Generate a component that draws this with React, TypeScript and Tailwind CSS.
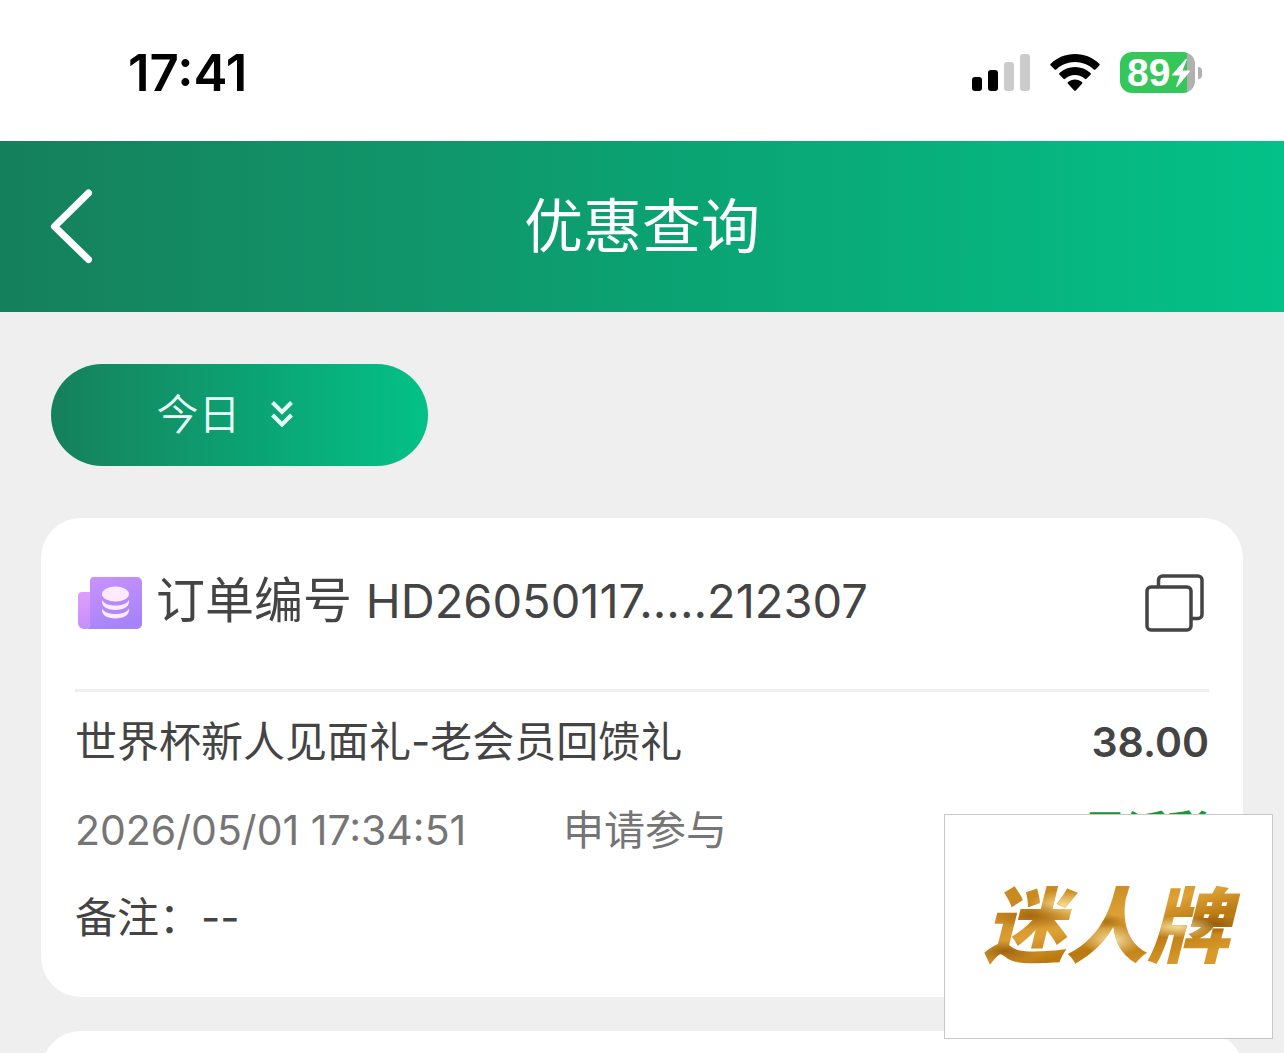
import React from 'react';

interface Order {
  id: string;
  title: string;
  amount: string;
  time: string;
  type: string;
  status: string;
  remark: string;
}

const order: Order = {
  id: 'HD26050117.....212307',
  title: '世界杯新人见面礼-老会员回馈礼',
  amount: '38.00',
  time: '2026/05/01 17:34:51',
  type: '申请参与',
  status: '已派彩',
  remark: '--',
};

const SignalIcon: React.FC = () => (
  <svg width="58" height="38" viewBox="0 0 58 38" aria-hidden="true">
    <rect x="0" y="23" width="10" height="14" rx="3" fill="#000" />
    <rect x="16" y="16" width="10" height="21" rx="3" fill="#000" />
    <rect x="32" y="8" width="10" height="29" rx="3" fill="#cbcbcb" />
    <rect x="48" y="0" width="10" height="37" rx="3" fill="#cbcbcb" />
  </svg>
);

const WifiIcon: React.FC = () => (
  <svg width="50" height="38" viewBox="0 0 50 38" aria-hidden="true">
    <path d="M25 0C15.500 0 7 3.700.700 9.700a1.200 1.200 0 0 0 0 1.700l3.900 4a1.200 1.200 0 0 0 1.700 0C11.200 10.800 17.800 8 25 8s13.800 2.800 18.700 7.400a1.200 1.200 0 0 0 1.700 0l3.900-4a1.200 1.200 0 0 0 0-1.700C43 3.700 34.500 0 25 0Z" />
    <path d="M25 13c-6 0-11.400 2.300-15.500 6a1.200 1.200 0 0 0 0 1.800l4 4a1.200 1.200 0 0 0 1.600 0C17.700 22.400 21.200 21 25 21s7.300 1.400 9.900 3.800a1.200 1.200 0 0 0 1.600 0l4-4a1.200 1.200 0 0 0 0-1.800C36.400 15.300 31 13 25 13Z" />
    <path d="M25 25.500c-2.700 0-5 .900-6.900 2.400a1.200 1.200 0 0 0-.1 1.800l6.200 6.800a1.100 1.100 0 0 0 1.600 0l6.200-6.800a1.200 1.200 0 0 0-.1-1.800c-1.900-1.500-4.200-2.400-6.900-2.400Z" />
  </svg>
);

const Battery: React.FC = () => (
  <div className="flex items-center gap-[3px]">
    <div className="flex h-[41px] w-[75px] items-center gap-px rounded-xl bg-linear-to-r from-[#35c75a] from-90% to-[#b0b0b0] to-90% pl-[7px]">
      <span className="font-['Liberation_Sans',sans-serif] text-[39px] leading-[44px] font-bold text-white">89</span>
      <svg width="20" height="28" viewBox="0 0 18 28" className="shrink-0" fill="#fff" aria-hidden="true">
        <path d="M13.500.300.400 15.200c-.5.600-.2 1.200.5 1.200h7L4.300 26.800c-.3 1 .6 1.500 1.300.700L17.600 12.700c.5-.6.200-1.300-.5-1.300h-6.600L14.700 1c.4-.9-.5-1.500-1.200-.7Z" />
      </svg>
    </div>
    <div className="h-3 w-1 rounded-r-full bg-[#b0b0b0]" />
  </div>
);

const BackIcon: React.FC = () => (
  <svg width="42" height="76" viewBox="0 0 42 76" fill="none" aria-hidden="true">
    <path d="M38.500 4 4.500 37.500l34 33" stroke="#fff" strokeWidth="7" strokeLinecap="round" strokeLinejoin="round" />
  </svg>
);

const DoubleChevronIcon: React.FC = () => (
  <svg width="22" height="26" viewBox="0 0 22 26" fill="none" aria-hidden="true">
    <path d="m1.500 1.500 9.500 9.500 9.500-9.500M1.500 14l9.500 9.500L20.500 14" stroke="#e9fff8" strokeWidth="4" />
  </svg>
);

const OrderIcon: React.FC = () => (
  <svg width="64" height="52" viewBox="0 0 64 52" className="shrink-0" aria-hidden="true">
    <defs>
      <linearGradient id="folderFront" x1="0" y1="0" x2="0.4" y2="1">
        <stop offset="0" stopColor="#cb93fb" />
        <stop offset="1" stopColor="#a784fb" />
      </linearGradient>
      <linearGradient id="folderBack" x1="0" y1="0" x2="0" y2="1">
        <stop offset="0" stopColor="#dda0fd" />
        <stop offset="1" stopColor="#c78df8" />
      </linearGradient>
    </defs>
    <path d="M16 0h43a5 5 0 0 1 5 5v42a5 5 0 0 1-5 5H6c4 0 6-2 6-6V4a4 4 0 0 1 4-4Z" fill="url(#folderFront)" />
    <path d="M4 15h8v31c0 4-2 6-6 6a6 6 0 0 1-6-6V19a4 4 0 0 1 4-4Z" fill="url(#folderBack)" />
    <ellipse cx="37.500" cy="17" rx="13.500" ry="7.500" fill="#fdeaff" />
    <path d="M24 23c2 3.800 7.500 5.500 13.500 5.500S49 26.800 51 23c1 6.500-5 10-13.500 10S23 29.500 24 23Z" fill="#fdeaff" />
    <path d="M24 31.500C26 35.300 31.500 37 37.500 37S49 35.300 51 31.500c1 6.500-5 10-13.500 10S23 38 24 31.500Z" fill="#fdeaff" />
  </svg>
);

const CopyIcon: React.FC = () => (
  <svg width="60" height="58" viewBox="0 0 60 58" fill="none" stroke="#444" strokeWidth="3.500" aria-hidden="true">
    <rect x="2" y="13" width="44" height="43" rx="4" />
    <path d="M13.500 13V6a4 4 0 0 1 4-4H53a4 4 0 0 1 4 4v34.500a4 4 0 0 1-4 4h-7" />
  </svg>
);

const StatusBar: React.FC = () => (
  <div className="flex h-[141px] shrink-0 items-center justify-between bg-white pt-1 pr-[82px] pl-32">
    <span className="text-[51px] leading-[60px] font-semibold text-black">17:41</span>
    <div className="flex items-center gap-5">
      <SignalIcon />
      <WifiIcon />
      <Battery />
    </div>
  </div>
);

const OrderCard: React.FC<{ order: Order }> = ({ order }) => (
  <article className="shrink-0 rounded-[40px] bg-white px-[34px] pt-[45px] pb-[43px] text-[#444]">
    <div className="flex items-center justify-between border-b-3 border-[#efefef] pb-[46px]">
      <div className="flex items-center gap-[14px] pl-[3px]">
        <OrderIcon />
        <h2 className="pb-1 text-[49px] leading-[76px]">
          订单编号 <span className="text-[47px]">{order.id}</span>
        </h2>
      </div>
      <button type="button" aria-label="复制" className="mr-1">
        <CopyIcon />
      </button>
    </div>
    <div className="flex items-center justify-between pt-[14px] text-[42px] leading-[72px]">
      <span>{order.title}</span>
      <span className="text-[41px] font-semibold">{order.amount}</span>
    </div>
    <div className="flex items-center pt-4 text-[41px] leading-[72px] text-[#757575]">
      <time className="w-[488px]">{order.time}</time>
      <span className="flex-1">{order.type}</span>
      <span className="font-semibold text-[#16992e]">{order.status}</span>
    </div>
    <p className="pt-4 text-[42px] leading-[72px]">备注：{order.remark}</p>
  </article>
);

const PromoPanel: React.FC = () => (
  <aside className="fixed right-[11px] bottom-[14px] flex h-[225px] w-[329px] items-center justify-center border border-[#c8c8c8] bg-white pr-1">
    <span className="bg-[radial-gradient(ellipse_at_22%_40%,#9c5f0bcc_0%,transparent_14%),radial-gradient(ellipse_at_52%_62%,#f8e2a4_0%,transparent_16%),radial-gradient(ellipse_at_76%_50%,#f6dc97_0%,transparent_14%),radial-gradient(ellipse_at_88%_48%,#84500acc_0%,transparent_12%),radial-gradient(ellipse_at_34%_30%,#f6d98c_0%,transparent_14%),radial-gradient(ellipse_at_12%_72%,#8f560acc_0%,transparent_10%),radial-gradient(ellipse_at_50%_45%,#a4680ecc_0%,transparent_9%),linear-gradient(165deg,#c98a20_25%,#dda136_45%,#b97810_60%,#d99a2c_80%)] bg-clip-text px-3 text-[82px] leading-[110px] font-black text-transparent italic">
      迷人牌
    </span>
  </aside>
);

const App: React.FC = () => {
  return (
    <div
      className="flex h-screen flex-col overflow-hidden bg-[#efefef] font-['Inter','Noto_Sans_CJK_SC',sans-serif]"
      lang="zh-CN"
    >
      <StatusBar />
      <header className="grid h-[171px] shrink-0 grid-cols-[1fr_auto_1fr] items-center bg-linear-to-r from-[#15805c] via-[#0ba171] to-[#03c188] px-[50px]">
        <button type="button" aria-label="返回" className="justify-self-start">
          <BackIcon />
        </button>
        <h1 className="text-[59px] leading-[80px] text-white">优惠查询</h1>
      </header>

      <main className="flex min-h-0 flex-1 flex-col overflow-hidden px-[41px] pt-[52px]">
        <button
          type="button"
          className="mb-[52px] ml-[10px] flex h-[102px] w-[377px] shrink-0 items-center justify-center gap-[30px] self-start rounded-full bg-linear-to-r from-[#15805c] via-[#0ba171] to-[#03c188] pr-[30px] pb-0.5 text-[42px] font-[350] text-[#e9fff8]"
        >
          今日
          <DoubleChevronIcon />
        </button>
        <OrderCard order={order} />
        {/* next order in the list */}
        <div className="mt-[34px] h-[480px] shrink-0 rounded-[40px] bg-white" />
      </main>

      <PromoPanel />
    </div>
  );
};

export default App;
